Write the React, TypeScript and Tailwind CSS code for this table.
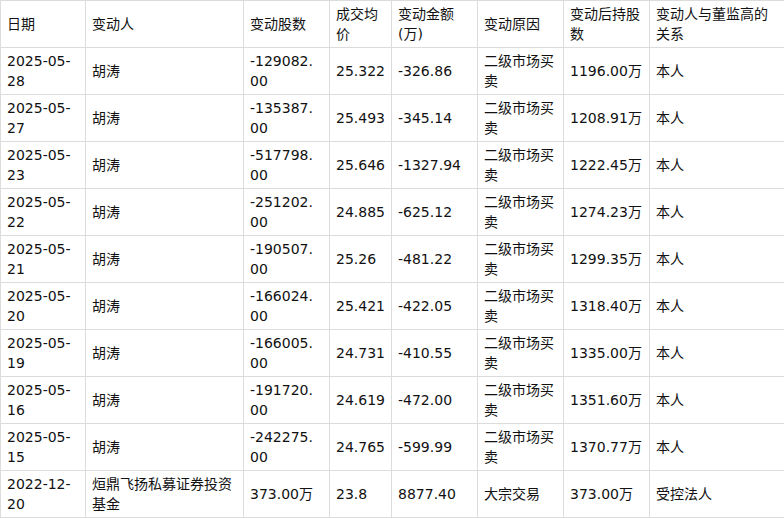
const headers = ["日期", "变动人", "变动股数", "成交均价", "变动金额(万)", "变动原因", "变动后持股数", "变动人与董监高的关系"];

const widths = [85, 158, 86, 62, 86, 86, 86, 135];

const rows: string[][] = [
  ["2025-05-28", "胡涛", "-129082.00", "25.322", "-326.86", "二级市场买卖", "1196.00万", "本人"],
  ["2025-05-27", "胡涛", "-135387.00", "25.493", "-345.14", "二级市场买卖", "1208.91万", "本人"],
  ["2025-05-23", "胡涛", "-517798.00", "25.646", "-1327.94", "二级市场买卖", "1222.45万", "本人"],
  ["2025-05-22", "胡涛", "-251202.00", "24.885", "-625.12", "二级市场买卖", "1274.23万", "本人"],
  ["2025-05-21", "胡涛", "-190507.00", "25.26", "-481.22", "二级市场买卖", "1299.35万", "本人"],
  ["2025-05-20", "胡涛", "-166024.00", "25.421", "-422.05", "二级市场买卖", "1318.40万", "本人"],
  ["2025-05-19", "胡涛", "-166005.00", "24.731", "-410.55", "二级市场买卖", "1335.00万", "本人"],
  ["2025-05-16", "胡涛", "-191720.00", "24.619", "-472.00", "二级市场买卖", "1351.60万", "本人"],
  ["2025-05-15", "胡涛", "-242275.00", "24.765", "-599.99", "二级市场买卖", "1370.77万", "本人"],
  ["2022-12-20", "烜鼎飞扬私募证券投资基金", "373.00万", "23.8", "8877.40", "大宗交易", "373.00万", "受控法人"],
];

export default function App() {
  return (
    <div className="bg-white w-[784px] h-[518px] overflow-hidden">
      <table
        className="table-fixed border-collapse w-[784px] text-[14px] leading-[20px] text-[#111]"
        style={{ fontFamily: '"DejaVu Sans", "Noto Sans CJK SC", sans-serif' }}
      >
        <colgroup>
          {widths.map((w, i) => (
            <col key={i} style={{ width: w }} />
          ))}
        </colgroup>
        <thead>
          <tr className="h-[47px]">
            {headers.map((h) => (
              <th
                key={h}
                className="border border-[#dcdcdc] px-[6px] py-[3px] text-left font-normal align-middle break-all"
              >
                {h}
              </th>
            ))}
          </tr>
        </thead>
        <tbody>
          {rows.map((r, i) => (
            <tr key={i} className="h-[47px]">
              {r.map((c, j) => (
                <td
                  key={j}
                  className={
                    j === 2
                      ? "border border-[#dcdcdc] pl-[6px] pr-[8px] py-[3px] align-middle break-all"
                      : "border border-[#dcdcdc] px-[6px] py-[3px] align-middle break-all"
                  }
                >
                  {c}
                </td>
              ))}
            </tr>
          ))}
        </tbody>
      </table>
    </div>
  );
}
